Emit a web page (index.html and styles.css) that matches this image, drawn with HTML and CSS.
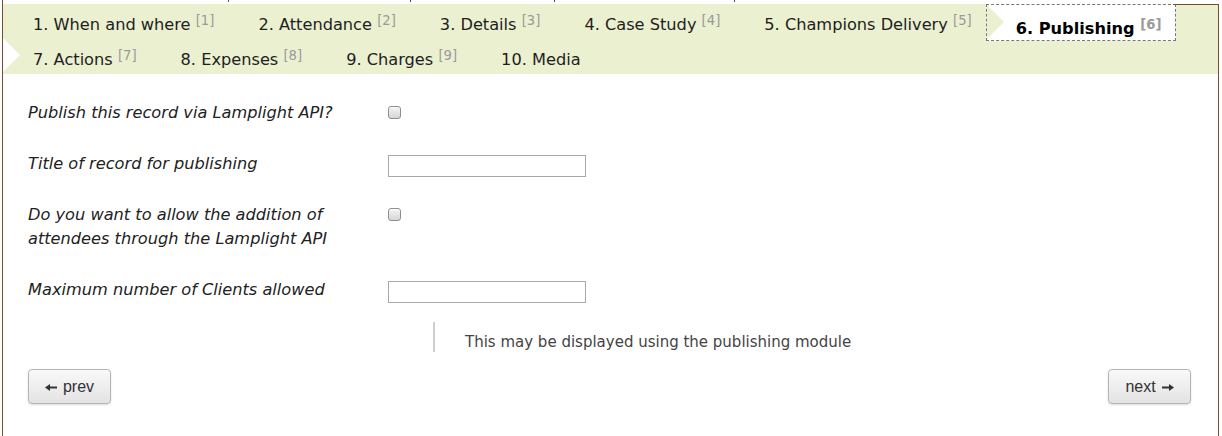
FILE: index.html
```html
<!DOCTYPE html>
<html>
<head>
<meta charset="utf-8">
<title>Publishing</title>
<link rel="stylesheet" href="styles.css">
</head>
<body>
<div class="frame">
  <div class="panel">
    <ul class="tabs">
      <li class="tab">1. When and where <sup>[1]</sup></li>
      <li class="tab tick">2. Attendance <sup>[2]</sup></li>
      <li class="tab tick">3. Details <sup>[3]</sup></li>
      <li class="tab tick">4. Case Study <sup>[4]</sup></li>
      <li class="tab tick">5. Champions Delivery <sup>[5]</sup></li>
      <li class="tab active">6. Publishing <sup>[6]</sup></li>
      <li class="tab row-start">7. Actions <sup>[7]</sup></li>
      <li class="tab">8. Expenses <sup>[8]</sup></li>
      <li class="tab">9. Charges <sup>[9]</sup></li>
      <li class="tab">10. Media</li>
    </ul>
    <form class="form">
      <div class="row">
        <label class="lbl">Publish this record via Lamplight API?</label>
        <div class="ctl"><input class="check" type="checkbox"></div>
      </div>
      <div class="row">
        <label class="lbl">Title of record for publishing</label>
        <div class="ctl"><input class="text" type="text"></div>
      </div>
      <div class="row">
        <label class="lbl">Do you want to allow the addition of attendees through the Lamplight API</label>
        <div class="ctl"><input class="check" type="checkbox"></div>
      </div>
      <div class="row">
        <label class="lbl">Maximum number of Clients allowed</label>
        <div class="ctl"><input class="text" type="text"></div>
      </div>
      <div class="help">This may be displayed using the publishing module</div>
      <div class="nav">
        <button type="button" class="btn"><svg class="arr" width="12" height="7" viewBox="0 0 12 7"><rect x="4" y="2.5" width="8" height="2" fill="#333"/><polygon points="5,0 0,3.5 5,7" fill="#333"/></svg>prev</button>
        <button type="button" class="btn">next<svg class="arr" width="12" height="7" viewBox="0 0 12 7"><rect x="0" y="2.5" width="8" height="2" fill="#333"/><polygon points="7,0 12,3.5 7,7" fill="#333"/></svg></button>
      </div>
    </form>
  </div>
</div>
</body>
</html>
```

FILE: styles.css
```css
html, body {
  margin: 0;
  padding: 0;
  background: #fff;
}

body {
  font-family: "DejaVu Sans", Verdana, sans-serif;
  color: #222;
}

.frame {
  margin-left: 2px;
  width: 1217px;
  height: 436px;
  box-sizing: border-box;
  border-left: 1px solid #7b4a2c;
  padding-top: 4px;
}

.panel {
  height: 432px;
  box-sizing: border-box;
  border-right: 1px solid #7b4a2c;
}

.tabs {
  position: relative;
  list-style: none;
  margin: 0;
  padding: 0;
  display: flex;
  flex-wrap: wrap;
  background: #eaf0d0;
}

.tabs::after {
  content: "";
  position: absolute;
  top: 0;
  right: 0;
  width: 45px;
  height: 1px;
  background: #7b4a2c;
}

.tab {
  position: relative;
  box-sizing: border-box;
  height: 35px;
  padding: 7px 14px 0 30px;
  line-height: 28px;
  font-size: 16.2px;
  white-space: nowrap;
  color: #1e1e1e;
}

.tab sup {
  font-size: 13.2px;
  line-height: 0;
  vertical-align: 5px;
  color: #9a9a9a;
}

.tab.tick::after {
  content: "";
  position: absolute;
  left: 0;
  top: -4px;
  width: 1px;
  height: 2px;
  background: #555;
}

.tab.active {
  height: 37px;
  margin-bottom: -2px;
  padding: 10px 13px 0 29px;
  border: 1px dashed #777;
  background: #fff;
  font-weight: bold;
  color: #000;
}

.tab.active::before {
  content: "";
  position: absolute;
  left: 0;
  top: 0;
  width: 0;
  height: 0;
  border-left: 17px solid #eaf0d0;
  border-top: 17.5px solid transparent;
  border-bottom: 17.5px solid transparent;
}

.tab.row-start::before {
  content: "";
  position: absolute;
  left: 0;
  top: -1px;
  width: 0;
  height: 0;
  border-left: 17px solid #fff;
  border-top: 17.5px solid transparent;
  border-bottom: 17.5px solid transparent;
}

.form {
  padding: 26px 27px 0 25px;
  margin: 0;
}

.row {
  display: flex;
  align-items: flex-start;
  margin-bottom: 27px;
  font-size: 16.2px;
  line-height: 24px;
}

.lbl {
  width: 345px;
  margin-right: 15px;
  padding-top: 1px;
  margin-bottom: -1px;
  font-style: italic;
  color: #222;
}

.ctl {
  display: flex;
}

.check {
  appearance: none;
  -webkit-appearance: none;
  width: 13px;
  height: 13px;
  margin: 6px 0 0 0;
  box-sizing: border-box;
  border: 1px solid #8e8e8e;
  border-radius: 3px;
  background: linear-gradient(#f4f4f4, #d6d6d6);
  box-shadow: inset 0 1px 0 #fff;
}

.text {
  width: 198px;
  height: 22px;
  margin: 4px 0 -2px 0;
  padding: 0;
  box-sizing: border-box;
  border: 1px solid #a9a9a9;
  background: #fff;
  font-family: inherit;
}

.help {
  margin: -6px 0 0 405px;
  height: 30px;
  box-sizing: border-box;
  border-left: 2px solid #cfcfcf;
  padding: 9px 0 0 30px;
  font-size: 15px;
  line-height: 22px;
  color: #444;
  overflow: visible;
}

.nav {
  display: flex;
  justify-content: space-between;
  margin-top: 17px;
}

.btn {
  display: inline-flex;
  align-items: center;
  justify-content: center;
  gap: 6px;
  width: 83px;
  height: 35px;
  padding: 1px 0 0;
  box-sizing: border-box;
  border: 1px solid #b5b5b5;
  border-radius: 4px;
  background: linear-gradient(#f9f9f9, #e3e3e3);
  box-shadow: 0 1px 2px rgba(0, 0, 0, 0.15);
  font-family: "Liberation Sans", Arial, sans-serif;
  font-size: 16px;
  color: #333;
}

.arr {
  display: block;
}
```
